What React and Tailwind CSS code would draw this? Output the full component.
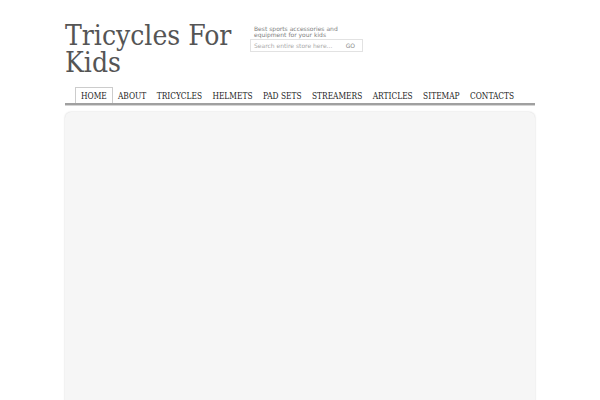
const navItems = ["HOME", "ABOUT", "TRICYCLES", "HELMETS", "PAD SETS", "STREAMERS", "ARTICLES", "SITEMAP", "CONTACTS"];

export default function App() {
    return (
        <div className="h-screen overflow-hidden bg-white" style={{ fontFamily: '"DejaVu Sans", sans-serif' }}>
            <div className="mx-auto w-[470px]">
                <div className="flex items-start pt-[20px]">
                    <h1 className="mt-[2px] w-[185px] shrink-0 whitespace-nowrap text-[28px] leading-[27px] text-[#555]" style={{ fontFamily: '"DejaVu Serif Condensed", "DejaVu Serif", serif' }}>
                        Tricycles For
                        <br />
                        Kids
                    </h1>
                    <div className="mt-[6px]">
                        <p className="w-[100px] pl-[4px] text-[6px] leading-[6px] text-[#808080]">
                            Best sports accessories and equipment for your kids
                        </p>
                        <div className="mt-[1px] flex h-[13px] w-[113px] items-center justify-between border border-[#e2e2e2] px-[3px] text-[6px] text-[#aaa]">
                            <span>Search entire store here...</span>
                            <span className="pr-[4px] text-[#888]">GO</span>
                        </div>
                    </div>
                </div>
                <div className="mt-[11px] border-b-2 border-[#a0a0a0] pl-[10px] shadow-[0_1px_0_#d4d4d4]">
                    <ul className="flex whitespace-nowrap text-[8.3px] text-[#222]" style={{ fontFamily: '"DejaVu Serif Condensed", "DejaVu Serif", serif' }}>
                        {navItems.map((item, i) => (
                            <li
                                key={item}
                                className={
                                    i === 0
                                        ? "border border-b-0 border-[#ccc] bg-white px-[5px] pb-[1px] pt-[2px]"
                                        : "px-[5.2px] pb-[1px] pt-[3px]"
                                }
                            >
                                {item}
                            </li>
                        ))}
                    </ul>
                </div>
                <div className="mt-[7px] h-[300px] rounded-t-[6px] bg-[#f6f6f6] shadow-[0_0_2px_rgba(0,0,0,0.2)]"></div>
            </div>
        </div>
    );
}
